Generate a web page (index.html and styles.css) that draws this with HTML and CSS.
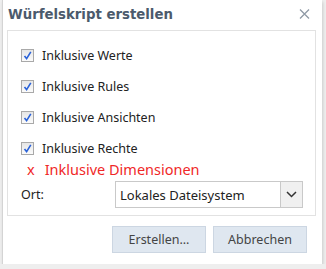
FILE: index.html
```html
<!DOCTYPE html>
<html lang="de">
<head>
    <meta charset="UTF-8">
    <title>Würfelskript erstellen</title>
    <link rel="stylesheet" href="styles.css">
</head>
<body>
    <div class="dialog">
        <div class="dialog-header">
            <span class="dialog-title">Würfelskript erstellen</span>
            <svg class="dialog-close" width="11" height="10" viewBox="0 0 11 10"><path d="M1 0.5 L10 9.5 M10 0.5 L1 9.5" stroke="#8f9aa6" stroke-width="1.3"/></svg>
        </div>

        <div class="dialog-panel">
            <label class="check-row"><span class="check-box"><svg width="11" height="11" viewBox="0 0 11 11"><path d="M2.5 6 L4.6 8.6 L8.8 1.8" fill="none" stroke="#2a62d8" stroke-width="1.6"/></svg></span>Inklusive Werte</label>
            <label class="check-row"><span class="check-box"><svg width="11" height="11" viewBox="0 0 11 11"><path d="M2.5 6 L4.6 8.6 L8.8 1.8" fill="none" stroke="#2a62d8" stroke-width="1.6"/></svg></span>Inklusive Rules</label>
            <label class="check-row"><span class="check-box"><svg width="11" height="11" viewBox="0 0 11 11"><path d="M2.5 6 L4.6 8.6 L8.8 1.8" fill="none" stroke="#2a62d8" stroke-width="1.6"/></svg></span>Inklusive Ansichten</label>
            <label class="check-row"><span class="check-box"><svg width="11" height="11" viewBox="0 0 11 11"><path d="M2.5 6 L4.6 8.6 L8.8 1.8" fill="none" stroke="#2a62d8" stroke-width="1.6"/></svg></span>Inklusive Rechte</label>
            <div class="missing-row"><span class="missing-mark">x</span>Inklusive Dimensionen</div>

            <div class="field-row">
                <span class="field-label">Ort:</span>
                <div class="select-box">
                    <span class="select-value">Lokales Dateisystem</span>
                    <span class="select-arrow"><svg width="11" height="7" viewBox="0 0 11 7"><path d="M1 1 L5.5 5.5 L10 1" fill="none" stroke="#333" stroke-width="1.5"/></svg></span>
                </div>
            </div>
        </div>

        <div class="dialog-buttons">
            <button class="btn">Erstellen...</button>
            <button class="btn">Abbrechen</button>
        </div>
    </div>
</body>
</html>
```

FILE: styles.css
```css
body {
    margin: 0;
    background-color: #eeeeee;
    font-family: "Noto Sans", "Open Sans", sans-serif;
    font-size: 12.5px;
    color: #222;
}
.dialog {
    width: 319px;
    height: 264px;
    margin-left: 2px;
    background-color: white;
    border-left: 1px solid #d4d4d4;
    box-shadow: 1px 2px 3px rgba(0, 0, 0, 0.15);
}
.dialog-header {
    display: flex;
    justify-content: space-between;
    align-items: center;
    height: 28px;
    padding: 0 12px 0 5px;
}
.dialog-title {
    font-family: "DejaVu Sans", sans-serif;
    font-weight: bold;
    font-size: 13.3px;
    color: #4b5a6c;
}
.dialog-panel {
    margin: 2px 6px 0 4px;
    height: 186px;
    border: 1px solid #e2e2e2;
    box-sizing: border-box;
    padding: 9px 0 0 13px;
}
.check-row {
    display: flex;
    align-items: center;
    height: 31px;
}
.check-box {
    display: flex;
    align-items: center;
    justify-content: center;
    width: 11px;
    height: 11px;
    border: 1px solid #a9a9a9;
    background: linear-gradient(#e6e6e6, #fbfbfb);
    margin-right: 8px;
}
.missing-row {
    margin-top: -5px;
    padding-left: 6px;
    font-size: 14.5px;
    color: #f02828;
    height: 22px;
}
.missing-mark {
    margin-right: 10px;
}
.field-row {
    display: flex;
    align-items: center;
    margin-top: 0;
}
.field-label {
    width: 94px;
}
.select-box {
    display: flex;
    width: 188px;
    height: 27px;
    border: 1px solid #c9c9c9;
    box-sizing: border-box;
}
.select-value {
    flex: 1;
    display: flex;
    align-items: center;
    padding-left: 4px;
    font-size: 13px;
}
.select-arrow {
    display: flex;
    align-items: center;
    justify-content: center;
    width: 21px;
    border-left: 1px solid #c9c9c9;
    background-color: #f0f0f0;
}
.dialog-buttons {
    display: flex;
    justify-content: flex-end;
    gap: 7px;
    padding: 10px 15px 0 0;
}
.btn {
    width: 94px;
    height: 27px;
    font-family: "Noto Sans", "Open Sans", sans-serif;
    font-size: 12.5px;
    color: #444;
    background-color: #dfe7f0;
    border: 1px solid #ccd6e2;
    padding: 0;
}
```
